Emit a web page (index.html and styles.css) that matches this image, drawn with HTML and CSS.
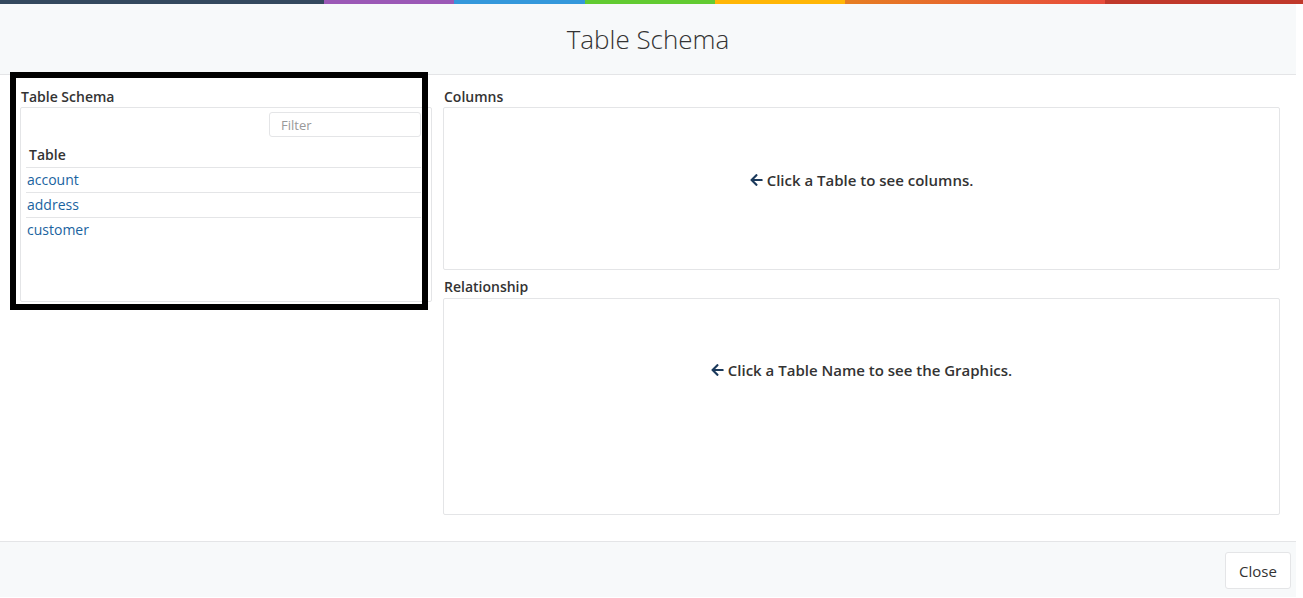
FILE: index.html
```
<!DOCTYPE html>
<html>
<head>
<meta charset="utf-8">
<link rel="stylesheet" href="styles.css">
</head>
<body>
<div class="stripe"></div>
<div class="modal">
  <div class="modal-header"><h4 class="modal-title">Table Schema</h4></div>
  <div class="modal-body">
    <div class="left-col">
      <div class="label">Table Schema</div>
      <div class="panel">
        <div class="filter-row"><input class="filter" type="text" placeholder="Filter"></div>
        <table class="tbl">
          <thead><tr><th>Table</th></tr></thead>
          <tbody>
            <tr><td><a href="#">account</a></td></tr>
            <tr><td><a href="#">address</a></td></tr>
            <tr><td><a href="#">customer</a></td></tr>
          </tbody>
        </table>
      </div>
    </div>
    <div class="right-col">
      <div class="label">Columns</div>
      <div class="box box-columns">
        <div class="hint"><svg class="arrow" viewBox="0 0 448 512"><path d="M257.5 445.1l-22.2 22.2c-9.4 9.4-24.6 9.4-33.9 0L7 273c-9.4-9.4-9.4-24.6 0-33.9L201.4 44.7c9.4-9.4 24.6-9.4 33.9 0l22.2 22.2c9.5 9.5 9.3 25-.4 34.3L136.6 216H424c13.3 0 24 10.7 24 24v32c0 13.3-10.7 24-24 24H136.6l120.5 114.8c9.8 9.3 10 24.8.4 34.3z"/></svg>Click a Table to see columns.</div>
      </div>
      <div class="label label-rel">Relationship</div>
      <div class="box box-rel">
        <div class="hint"><svg class="arrow" viewBox="0 0 448 512"><path d="M257.5 445.1l-22.2 22.2c-9.4 9.4-24.6 9.4-33.9 0L7 273c-9.4-9.4-9.4-24.6 0-33.9L201.4 44.7c9.4-9.4 24.6-9.4 33.9 0l22.2 22.2c9.5 9.5 9.3 25-.4 34.3L136.6 216H424c13.3 0 24 10.7 24 24v32c0 13.3-10.7 24-24 24H136.6l120.5 114.8c9.8 9.3 10 24.8.4 34.3z"/></svg>Click a Table Name to see the Graphics.</div>
      </div>
    </div>
  </div>
  <div class="modal-footer"><button class="btn" type="button">Close</button></div>
</div>
<div class="highlight"></div>
</body>
</html>
```
FILE: styles.css
```
* { box-sizing: border-box; }
html, body { margin: 0; padding: 0; background: #fff; }
body {
  font-family: "Open Sans", "Liberation Sans", sans-serif;
  color: #333;
  width: 1303px;
  height: 598px;
  overflow: hidden;
  position: relative;
}
.stripe {
  height: 4px;
  width: 1303px;
  background: linear-gradient(to right,
    #34495e 0, #34495e 324px,
    #9b59b6 324px, #9b59b6 454px,
    #3498db 454px, #3498db 585px,
    #62cb31 585px, #62cb31 715px,
    #ffb606 715px, #ffb606 845px,
    #e67e22 845px, #e74c3c 1105px,
    #c0392b 1105px, #c0392b 1303px);
}
.modal { width: 1296px; }
.modal-header {
  height: 71px;
  background: #f7f9fa;
  border-bottom: 1px solid #e4e5e7;
  display: flex;
  align-items: center;
  justify-content: center;
}
.modal-title {
  margin: 0;
  font-weight: 300;
  font-size: 26px;
  color: #333;
  padding-bottom: 0;
}
.modal-body {
  display: flex;
  gap: 11px;
  padding: 12px 16px 26px 19px;
}
.left-col { width: 413px; }
.right-col { flex: 1; }
.label {
  font-size: 14px;
  font-weight: 600;
  height: 20px;
  line-height: 20px;
  color: #333;
  padding-left: 2px;
}
.label-rel { margin-top: 7px; height: 21px; }
.right-col .label { padding-left: 1px; }
.panel {
  height: 195px;
  border: 1px solid #e4e5e7;
  border-radius: 2px;
  padding: 4px 10px 0 5px;
  margin-left: 1px;
}
.filter-row { display: flex; justify-content: flex-end; }
.filter {
  width: 152px;
  height: 25px;
  border: 1px solid #e4e5e7;
  border-radius: 3px;
  padding: 1px 11px 0;
  font-family: inherit;
  font-size: 13px;
  color: #555;
  outline: none;
}
.filter::placeholder { color: #999; }
.tbl {
  width: 100%;
  border-collapse: collapse;
  margin-top: 4px;
}
.tbl th {
  text-align: left;
  font-size: 14px;
  font-weight: 600;
  height: 26px;
  padding: 2px 0 0 3px;
  border-bottom: 1px solid #e4e5e7;
}
.tbl td {
  height: 25px;
  font-size: 14px;
  padding: 0 0 0 1px;
  border-bottom: 1px solid #e4e5e7;
}
.tbl tr:last-child td { border-bottom: none; }
.tbl a { color: #1a63a0; text-decoration: none; }
.box {
  border: 1px solid #e4e5e7;
  border-radius: 2px;
  display: flex;
  justify-content: center;
  align-items: flex-start;
}
.box-columns { height: 163px; padding-top: 62px; }
.box-rel { height: 217px; padding-top: 61px; }
.hint {
  font-size: 15px;
  font-weight: 600;
  color: #333;
  display: flex;
  align-items: center;
  line-height: 20px;
}
.arrow { width: 13px; height: 14px; fill: #1b3a5c; margin-right: 4px; }
.modal-footer {
  height: 56px;
  background: #f7f9fa;
  border-top: 1px solid #e4e5e7;
  display: flex;
  justify-content: flex-end;
  align-items: flex-start;
  padding: 10px 5px 0 0;
}
.btn {
  height: 37px;
  width: 66px;
  background: #fff;
  border: 1px solid #e4e5e7;
  border-radius: 3px;
  font-family: inherit;
  font-size: 15px;
  color: #333;
  padding: 0;
}
.highlight {
  position: absolute;
  left: 10px;
  top: 72px;
  width: 418px;
  height: 238px;
  border: 6px solid #000;
  pointer-events: none;
}
```
